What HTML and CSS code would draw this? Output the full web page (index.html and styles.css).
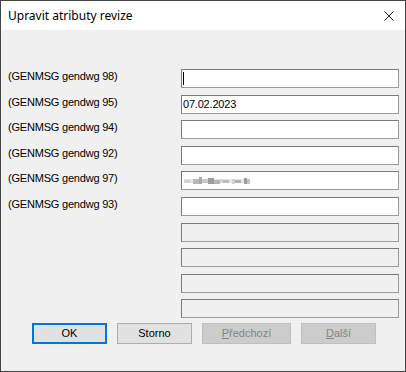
FILE: index.html
```html
<!DOCTYPE html>
<html lang="cs">
<head>
<meta charset="utf-8">
<title>Upravit atributy revize</title>
<link rel="stylesheet" href="styles.css">
</head>
<body>
<div class="window">
  <div class="titlebar">
    <span class="title">Upravit atributy revize</span>
    <svg class="close" width="10" height="10" viewBox="0 0 10 10"><path d="M0.5 0.5 L9.5 9.5 M9.5 0.5 L0.5 9.5" stroke="#1a1a1a" stroke-width="1" fill="none"/></svg>
  </div>
  <div class="content">
    <div class="form">
      <div class="label">(GENMSG gendwg 98)</div>
      <div class="field"><span class="caret"></span></div>
      <div class="label">(GENMSG gendwg 95)</div>
      <div class="field">07.02.2023</div>
      <div class="label">(GENMSG gendwg 94)</div>
      <div class="field"></div>
      <div class="label">(GENMSG gendwg 92)</div>
      <div class="field"></div>
      <div class="label">(GENMSG gendwg 97)</div>
      <div class="field">
        <svg class="mosaic" width="66" height="8" viewBox="0 0 66 8">
          <rect x="0" y="2" width="66" height="4" fill="#e6e6e6"/>
          <rect x="0" y="3" width="6" height="3" fill="#cfcfcf"/>
          <rect x="9" y="2" width="6" height="5" fill="#b9b9b9"/>
          <rect x="15" y="0" width="3" height="7" fill="#a8a8a8"/>
          <rect x="18" y="2" width="6" height="4" fill="#c8c8d0"/>
          <rect x="24" y="1" width="6" height="6" fill="#9e9e9e"/>
          <rect x="30" y="3" width="6" height="4" fill="#b4b4bc"/>
          <rect x="36" y="2" width="3" height="4" fill="#d8d0d2"/>
          <rect x="39" y="3" width="6" height="3" fill="#bcbcbc"/>
          <rect x="48" y="2" width="3" height="5" fill="#c9d6cb"/>
          <rect x="51" y="3" width="6" height="3" fill="#b1b1b1"/>
          <rect x="60" y="1" width="3" height="6" fill="#9c9c9c"/>
          <rect x="63" y="2" width="3" height="5" fill="#c4c4c4"/>
        </svg>
      </div>
      <div class="label">(GENMSG gendwg 93)</div>
      <div class="field"></div>
      <div class="label"></div>
      <div class="field disabled"></div>
      <div class="label"></div>
      <div class="field disabled"></div>
      <div class="label"></div>
      <div class="field disabled"></div>
      <div class="label"></div>
      <div class="field disabled"></div>
    </div>
    <div class="buttons">
      <div class="btn default">OK</div>
      <div class="btn">Storno</div>
      <div class="btn off wide"><u>P</u>ředchozí</div>
      <div class="btn off"><u>D</u>alší</div>
    </div>
  </div>
</div>
</body>
</html>
```

FILE: styles.css
```css
html, body {
  margin: 0;
  padding: 0;
  background: #f0f0f0;
}
.window {
  width: 406px;
  height: 372px;
  box-sizing: border-box;
  border: 1px solid #444444;
  background: #f0f0f0;
  display: flex;
  flex-direction: column;
}
.titlebar {
  height: 29px;
  background: #ffffff;
  display: flex;
  align-items: center;
  justify-content: space-between;
  padding: 0 11px 0 7px;
  flex: none;
}
.title {
  font-family: "Noto Sans", "Open Sans", sans-serif;
  font-size: 12px;
  color: #000000;
  padding-bottom: 1px;
}
.close {
  display: block;
}
.content {
  flex: 1;
  padding: 39px 6px 0 7px;
  font-family: "Liberation Sans", Arial, sans-serif;
  font-size: 11px;
  color: #000000;
}
.form {
  display: grid;
  grid-template-columns: 173px 218px;
  grid-auto-rows: 19px;
  row-gap: 6.6px;
}
.label {
  line-height: 13px;
  padding-top: 1px;
  white-space: nowrap;
  letter-spacing: -0.2px;
}
.field {
  box-sizing: border-box;
  height: 19px;
  background: #ffffff;
  border: 1px solid #7a7a7a;
  border-bottom-color: #9a9a9a;
  border-right-color: #9a9a9a;
  padding: 0 2px 0 1px;
  line-height: 17px;
  display: flex;
  align-items: center;
  letter-spacing: -0.2px;
}
.field.disabled {
  background: #f0f0f0;
}
.caret {
  display: block;
  width: 1px;
  height: 13px;
  background: #000000;
}
.mosaic {
  display: block;
  margin-left: 1px;
}
.buttons {
  display: flex;
  gap: 10px;
  margin: 4.6px 0 0 24px;
}
.btn {
  box-sizing: border-box;
  width: 75px;
  height: 21px;
  background: #e1e1e1;
  border: 1px solid #adadad;
  display: flex;
  align-items: center;
  justify-content: center;
  color: #000000;
}
.btn.default {
  border: 2px solid #0078d7;
}
.btn.off {
  background: #cccccc;
  border-color: #bfbfbf;
  color: #838383;
}
.btn.wide {
  width: 89px;
}
.btn u {
  text-decoration: underline;
  text-underline-offset: 1px;
}
```
